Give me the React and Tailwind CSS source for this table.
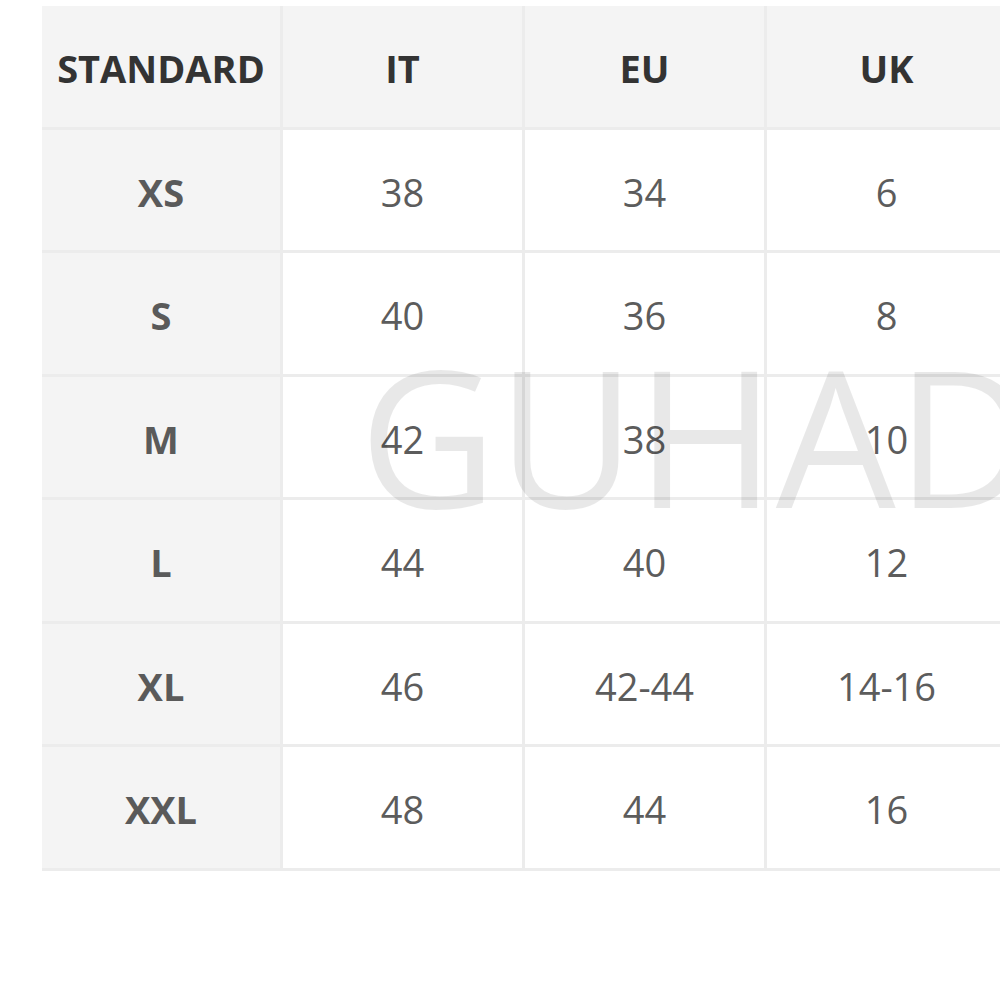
const header = ['STANDARD', 'IT', 'EU', 'UK']
const rows = [
  ['XS', '38', '34', '6'],
  ['S', '40', '36', '8'],
  ['M', '42', '38', '10'],
  ['L', '44', '40', '12'],
  ['XL', '46', '42-44', '14-16'],
  ['XXL', '48', '44', '16'],
]

export default function App() {
  return (
    <div className="relative w-[1000px] h-[1000px] overflow-hidden bg-white" style={{ fontFamily: '"Open Sans", "Liberation Sans", sans-serif' }}>
      <div className="pl-[42px] pt-[6px]">
        <div className="grid grid-cols-[238px_239px_239px_239px] auto-rows-[120.5px] gap-[3px] w-max bg-[#ececec] pb-[3px]">
          {header.map((h) => (
            <div key={h} className="bg-[#f4f4f4] flex items-center justify-center pt-[5px] text-[38px] font-bold text-[#333]">
              {h}
            </div>
          ))}
          {rows.map((r) =>
            r.map((c, i) => (
              <div
                key={r[0] + i}
                className={
                  i === 0
                    ? 'bg-[#f4f4f4] flex items-center justify-center pt-[5px] text-[38px] font-bold text-[#5a5a5a]'
                    : 'bg-white flex items-center justify-center pt-[5px] text-[38px] text-[#5c5c5c]'
                }
              >
                {c}
              </div>
            ))
          )}
        </div>
      </div>
      <div className="absolute left-[359px] top-[340px] text-[190px] leading-none whitespace-nowrap text-black/[0.09] pointer-events-none select-none">
        GUHAD
      </div>
    </div>
  )
}
